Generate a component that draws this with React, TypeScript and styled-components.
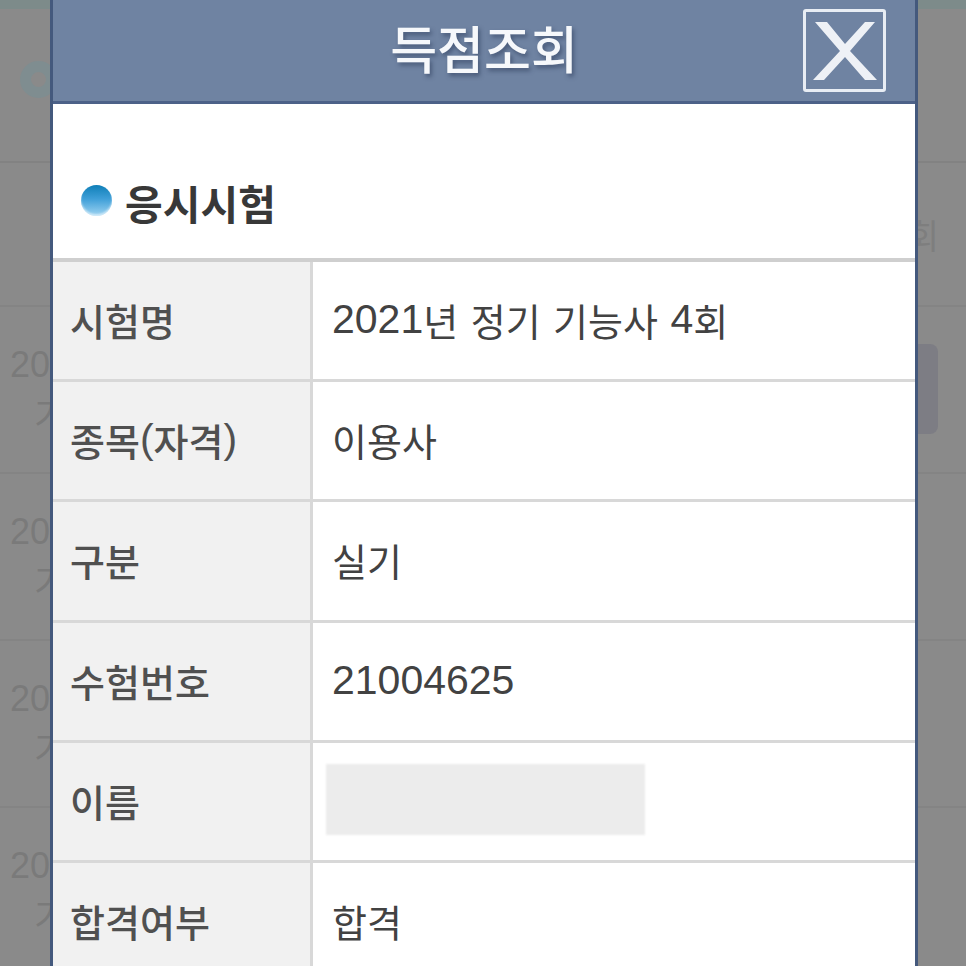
import React from 'react';
import styled, { createGlobalStyle } from 'styled-components';

const fontStack = `"Noto Sans CJK KR", "Liberation Sans", sans-serif`;

const GlobalStyle = createGlobalStyle`
  html, body {
    margin: 0;
    padding: 0;
    height: 966px;
    overflow: hidden;
    background: #8a8a8a;
    font-family: ${fontStack};
  }
`;

const Page = styled.div`
  position: relative;
  width: 966px;
  height: 966px;
  overflow: hidden;
  background: #8a8a8a;
`;

const TopStrip = styled.div`
  height: 9px;
  background: #7d8b8a;
`;

const BackHeader = styled.div`
  height: 154px;
  display: flex;
  align-items: center;
  padding: 0 0 0 20px;
  border-bottom: 2px solid #828282;
  box-sizing: border-box;
`;

const BackRing = styled.div`
  width: 37px;
  height: 37px;
  border-radius: 50%;
  border: 11px solid #7f8d90;
  box-sizing: border-box;
  margin-top: -12px;
`;

const BackLabelRow = styled.div`
  height: 144px;
  display: flex;
  justify-content: flex-end;
  align-items: center;
  padding-right: 27px;
  color: #7e7e7e;
  font-size: 34px;
  border-bottom: 2px solid #848484;
  box-sizing: border-box;
`;

const BackRow = styled.div`
  position: relative;
  height: 167px;
  padding: 38px 0 0 10px;
  box-sizing: border-box;
  border-bottom: 2px solid #848484;
  color: #7a7a7a;
  font-family: "Liberation Sans", sans-serif;
  font-size: 36px;
  line-height: 40px;
`;

const BackSub = styled.div`
  margin: 8px 0 0 24px;
  font-family: ${fontStack};
`;

const BackButton = styled.div`
  position: absolute;
  top: 37px;
  right: 28px;
  width: 30px;
  height: 90px;
  border-radius: 8px;
  background: #7d7d84;
`;

const Modal = styled.div`
  position: absolute;
  top: 0;
  left: 50px;
  width: 868px;
  height: 966px;
  box-sizing: border-box;
  background: #fff;
  border-left: 3px solid #44597d;
  border-right: 3px solid #44597d;
  overflow: hidden;
`;

const ModalHeader = styled.div`
  position: relative;
  height: 104px;
  margin: 0 -3px;
  box-sizing: border-box;
  display: flex;
  align-items: center;
  justify-content: center;
  background: #6f83a2;
  border-bottom: 3px solid #4c6188;
`;

const ModalTitle = styled.h1`
  margin: 0 0 8px;
  color: #f6f8fb;
  font-size: 51px;
  font-weight: 500;
  letter-spacing: 0;
  text-shadow: 2px 3px 4px rgba(40, 55, 85, 0.55);
`;

const CloseButton = styled.button`
  position: absolute;
  top: 9px;
  right: 32px;
  width: 83px;
  height: 83px;
  padding: 0;
  box-sizing: border-box;
  background: transparent;
  border: 3px solid #e8edf4;
  border-radius: 3px;
  display: flex;
  align-items: center;
  justify-content: center;
`;

const SectionHead = styled.div`
  height: 154px;
  box-sizing: border-box;
  display: flex;
  align-items: center;
  gap: 13px;
  padding: 42px 0 0 28px;
`;

const Bullet = styled.span`
  width: 31px;
  height: 31px;
  border-radius: 50%;
  margin-top: -4px;
  background: linear-gradient(180deg, #0f7fb8 0%, #3f9fd8 45%, #9fd4f2 100%);
  box-shadow: inset 0 -2px 2px rgba(255, 255, 255, 0.5);
`;

const SectionTitle = styled.h2`
  margin: 0;
  color: #383838;
  font-size: 41px;
  font-weight: 700;
  letter-spacing: 0;
`;

const Table = styled.div`
  border-top: 4px solid #cfcfcf;
`;

const Row = styled.div`
  display: grid;
  grid-template-columns: 260px 1fr;
  height: 120.2px;
  box-sizing: border-box;
  border-bottom: 3px solid #d8d8d8;
`;

const Th = styled.div`
  display: flex;
  align-items: center;
  padding: 0 0 2px 17px;
  background: #f1f1f1;
  border-right: 3px solid #d8d8d8;
  color: #505050;
  font-size: 38px;
  font-weight: 500;
  white-space: pre;
`;

const Td = styled.div`
  display: flex;
  align-items: center;
  padding: 0 0 2px 19px;
  color: #424242;
  font-size: 38px;
  word-spacing: 4px;
  white-space: pre;
`;

const Num = styled.span`
  font-family: "Liberation Sans", sans-serif;
  font-size: 41px;
`;

const Blur = styled.div`
  width: 319px;
  height: 71px;
  margin: 0 0 1px -6px;
  background: #ececec;
  filter: blur(1px);
`;

const rows: [string, string][] = [
  ['시험명', '2021년 정기 기능사 4회'],
  ['종목(자격)', '이용사'],
  ['구분', '실기'],
  ['수험번호', '21004625'],
  ['이름', ''],
  ['합격여부', '합격'],
];

// digits and brackets are wider than the korean font's own, so they get the latin face
const withNums = (text: string) =>
  text.split(/([\d()]+)/).map((part, i) =>
    /[\d()]/.test(part) ? <Num key={i}>{part}</Num> : part
  );

const App = () => (
  <Page>
    <GlobalStyle />
    <TopStrip />
    <BackHeader>
      <BackRing />
    </BackHeader>
    <BackLabelRow>회</BackLabelRow>
    {[0, 1, 2, 3].map((i) => (
      <BackRow key={i}>
        20
        <BackSub>기</BackSub>
        {i === 0 && <BackButton />}
      </BackRow>
    ))}

    <Modal>
      <ModalHeader>
        <ModalTitle>득점조회</ModalTitle>
        <CloseButton aria-label="닫기">
          <svg width="64" height="60" viewBox="0 0 64 60">
            <path
              d="M2 1h12l18 22L52 1h10L37 30l27 29H52L32 36 11 59H0l27-29z"
              fill="#eef1f6"
            />
          </svg>
        </CloseButton>
      </ModalHeader>
      <SectionHead>
        <Bullet />
        <SectionTitle>응시시험</SectionTitle>
      </SectionHead>
      <Table>
        {rows.map(([label, value]) => (
          <Row key={label}>
            <Th>{withNums(label)}</Th>
            <Td>{value ? withNums(value) : <Blur />}</Td>
          </Row>
        ))}
      </Table>
    </Modal>
  </Page>
);

export default App;
